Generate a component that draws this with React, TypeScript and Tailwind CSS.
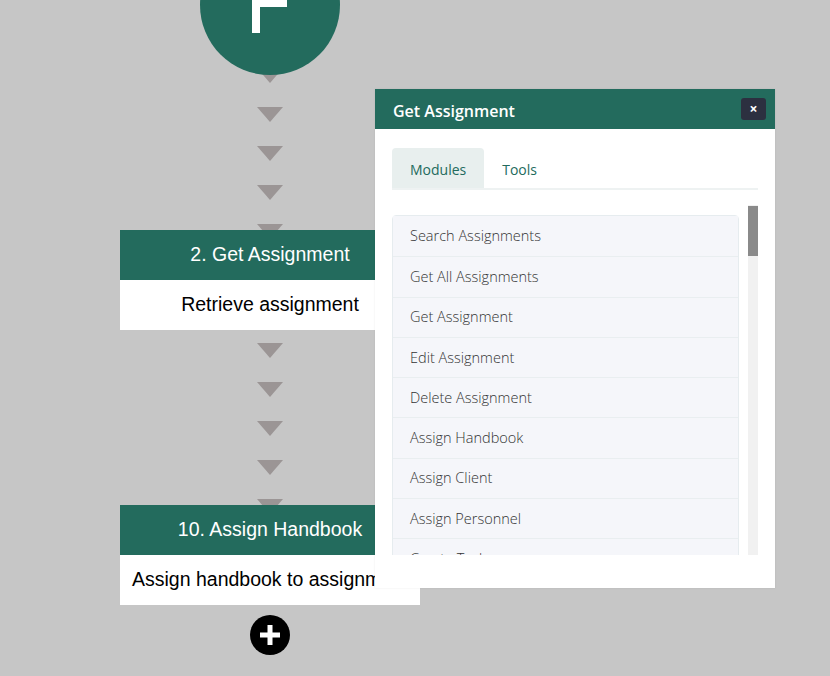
import React from "react";

const Arrow = () => (
  <div className="w-0 h-0 border-l-[13px] border-r-[13px] border-t-[15px] border-l-transparent border-r-transparent border-t-[#9b9595] shrink-0" />
);

const Arrows = ({ first }: { first: string }) => (
  <div className={`flex flex-col items-center gap-[24px] ${first}`}>
    <Arrow />
    <Arrow />
    <Arrow />
    <Arrow />
    <Arrow />
  </div>
);

const Box = ({ title, desc, left }: { title: string; desc: string; left?: boolean }) => (
  <div className="relative z-10 w-[300px] -mt-[9px] flex flex-col" style={{ fontFamily: '"Liberation Sans", Arial, sans-serif' }}>
    <div className="h-[50px] bg-[#236b5d] text-white text-[19.5px] flex items-center justify-center">{title}</div>
    <div
      className={`h-[50px] bg-white text-black text-[19.5px] flex items-center overflow-hidden whitespace-nowrap ${left ? "justify-start pl-[12px]" : "justify-center"}`}
    >
      {desc}
    </div>
  </div>
);

const items = [
  "Search Assignments",
  "Get All Assignments",
  "Get Assignment",
  "Edit Assignment",
  "Delete Assignment",
  "Assign Handbook",
  "Assign Client",
  "Assign Personnel",
  "Create Task",
  "Get Tasks",
];

export default function App() {
  return (
    <div className="relative w-[830px] h-[676px] bg-[#c6c6c6] overflow-hidden">
      <div className="ml-[120px] w-[300px] flex flex-col items-center">
        <div className="relative z-10 w-[140px] h-[140px] -mt-[65px] rounded-full bg-[#236b5d] shrink-0">
          <svg width="140" height="140" viewBox="0 0 140 140">
            <rect x="52" y="30" width="8" height="68" fill="#fff" />
            <rect x="52" y="30" width="35" height="42" fill="#fff" />
          </svg>
        </div>
        <Arrows first="-mt-[7px]" />
        <Box title="2. Get Assignment" desc="Retrieve assignment" />
        <Arrows first="mt-[13px]" />
        <Box title="10. Assign Handbook" desc="Assign handbook to assignment" left />
        <div className="mt-[10px] w-[40px] h-[40px] rounded-full bg-black flex items-center justify-center">
          <svg width="24" height="24" viewBox="0 0 24 24">
            <rect x="2" y="9.5" width="20" height="5" fill="#fff" />
            <rect x="9.5" y="2" width="5" height="20" fill="#fff" />
          </svg>
        </div>
      </div>

      <div
        className="absolute left-[375px] top-[89px] w-[400px] h-[499px] bg-white z-20 flex flex-col shadow-[0_0_2px_rgba(0,0,0,0.08)]"
        style={{ fontFamily: '"Open Sans", "Noto Sans", sans-serif' }}
      >
        <div className="h-[40px] bg-[#236b5d] flex items-center justify-between pl-[18px] pr-[9px] shrink-0">
          <span className="text-white text-[16px] font-semibold pt-[4px]">Get Assignment</span>
          <div className="w-[25px] h-[22px] rounded-[3px] bg-[#2c3040] text-white flex items-center justify-center text-[14px] font-bold leading-none">
            ×
          </div>
        </div>
        <div className="px-[17px] pt-[19px] flex flex-col">
          <div className="flex border-b-2 border-[#eef2f2] w-[366px]">
            <div className="h-[40px] px-[18px] bg-[#e8efee] rounded-t-[4px] flex items-center text-[14px] text-[#236b5d] pt-[2px]">Modules</div>
            <div className="h-[40px] px-[18px] flex items-center text-[14px] text-[#236b5d] pt-[2px]">Tools</div>
          </div>
          <div className="mt-[15px] h-[350px] w-[366px] flex gap-[9px] overflow-hidden">
            <div className="w-[347px] pt-[10px] flex flex-col">
              <div className="border border-[#e6ecef] rounded-[4px]">
                {items.map((t, i) => (
                  <div
                    key={t}
                    className={`h-[40.25px] bg-[#f5f6fa] flex items-center pl-[17px] text-[14.5px] font-light text-[#333] ${i > 0 ? "border-t border-[#e9eef0]" : ""}`}
                  >
                    {t}
                  </div>
                ))}
              </div>
            </div>
            <div className="w-[10px] h-[350px] bg-[#f1f1f1] pt-[1px]">
              <div className="w-[10px] h-[50px] bg-[#8a8a8a]" />
            </div>
          </div>
        </div>
      </div>
    </div>
  );
}
